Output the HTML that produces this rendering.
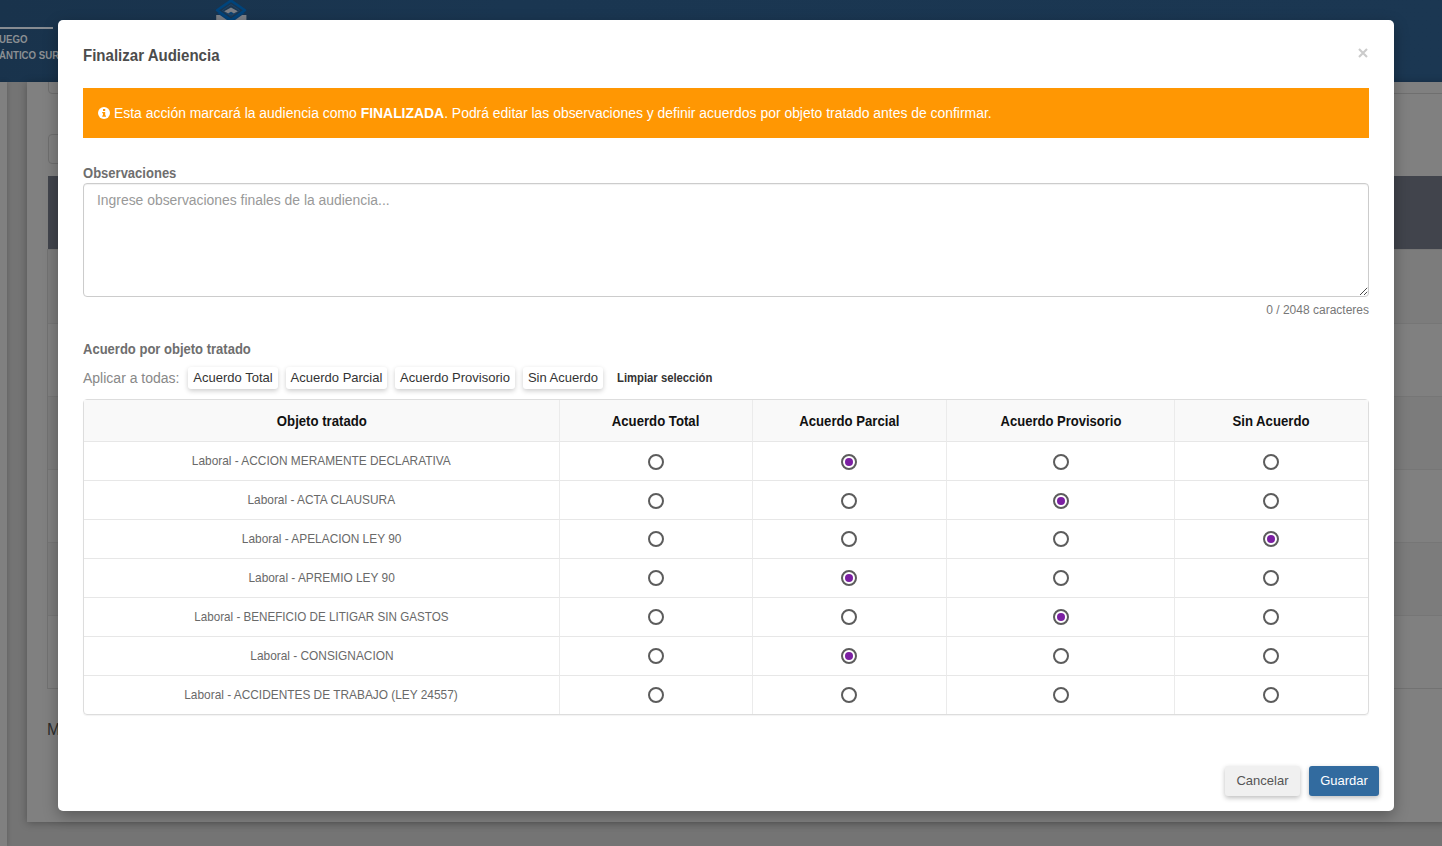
<!DOCTYPE html>
<html lang="es">
<head>
<meta charset="utf-8">
<title>Finalizar Audiencia</title>
<style>
*{box-sizing:border-box}
html,body{margin:0;padding:0}
body{width:1442px;height:846px;overflow:hidden;position:relative;background:#747474;font-family:"Liberation Sans",sans-serif;font-size:14px;color:#333}
.abs{position:absolute}
/* ---------- dimmed page behind the modal ---------- */
.bg-head{left:0;top:0;width:1442px;height:82px;background:linear-gradient(100deg,#19334c 0%,#1a3651 35%,#1b3752 100%)}
.bg-s1{left:0;top:82px;width:7px;height:764px;background:#808080;box-shadow:0 0 5px rgba(0,0,0,.22)}
.bg-panel{left:27px;top:82px;width:1420px;height:740px;background:#808080;box-shadow:0 1px 8px rgba(0,0,0,.3)}
.bg-line{left:0;top:26.7px;width:53px;height:2px;background:#878c92}
.bg-brand{left:-1.2px;top:31.4px;font-size:10.7px;font-weight:700;line-height:16px;color:#8b8f93;white-space:nowrap;transform-origin:0 0;transform:scaleX(.905)}
.bg-box{border:1px solid #6f6f6f;border-radius:4px}
.bg-th{left:48px;top:176px;width:1394px;height:73px;background:#41444c}
.bg-tbl{left:47px;top:249px;width:1400px;height:440px;border-left:1px solid #727272;border-bottom:1px solid #727272}
.bg-row{left:48px;width:1394px;height:73px;background:#7c7c7c;border-top:1px solid #767676;border-bottom:1px solid #767676}
.bg-m{left:47px;top:720.6px;font-size:16px;line-height:18px;color:#2c2c2c}
/* ---------- modal ---------- */
.modal{left:58px;top:20px;width:1336px;height:791px;background:#fff;border-radius:5px;box-shadow:0 5px 15px rgba(0,0,0,.3)}
.title{left:25px;top:25px;font-size:16px;font-weight:700;color:#4c4c4c;line-height:22px;white-space:nowrap;transform-origin:0 50%;transform:scaleX(.94)}
.close{left:1300.4px;top:28.4px;width:10px;height:10px}
.alert{left:25px;top:68px;width:1286px;height:50px;background:#ff9703;color:#fff;font-size:14px;line-height:50px;white-space:nowrap}
.alert svg{position:absolute;left:15px;top:19px}
.alert .t{position:absolute;left:31px;top:0;transform-origin:0 50%;transform:scaleX(.9937)}
.lbl{font-size:14px;font-weight:700;color:#6e6e6e;line-height:20px;white-space:nowrap;transform-origin:0 50%;transform:scaleX(.93)}
.ta{left:25px;top:163px;width:1286px;height:114px;border:1px solid #ccc;border-radius:4px;background:#fff;box-shadow:inset 0 1px 1px rgba(0,0,0,.06)}
.ta .ph{position:absolute;left:12.6px;top:6px;font-size:14px;line-height:20px;color:#999;white-space:nowrap;transform-origin:0 50%;transform:scaleX(.992)}
.ta svg{position:absolute;right:0;bottom:0}
.count{right:25px;top:282px;font-size:12px;line-height:16px;color:#777;white-space:nowrap}
.apply{left:25px;top:348px;font-size:14px;line-height:20px;color:#888;white-space:nowrap}
.sb{top:347px;height:22px;background:#fff;border-radius:3px;font-size:13px;line-height:22px;color:#333;text-align:center;white-space:nowrap;box-shadow:0 2px 5px rgba(0,0,0,.2)}
.clear{left:559px;top:348px;font-size:12px;font-weight:700;line-height:20px;color:#333;white-space:nowrap;transform-origin:0 50%;transform:scaleX(.94)}
table{position:absolute;left:25px;top:379px;width:1286px;border-collapse:separate;border-spacing:0;border:1px solid #ddd;border-radius:4px;table-layout:fixed;box-shadow:0 1px 1px rgba(0,0,0,.05)}
th,td{text-align:center;vertical-align:middle;padding:0;border-left:1px solid #ebebeb;border-top:1px solid #e7e7e7}
th:first-child,td:first-child{border-left:0}
th{height:41px;background:#f9f9f9;font-size:14px;font-weight:700;color:#111;border-top:0}
th span{display:inline-block;transform:scaleX(.94)}
td{height:39px;font-size:12.6px;color:#696969}
td span{display:inline-block;position:relative;top:0;white-space:nowrap;transform:scaleX(.943)}
td:nth-child(3) .r,td:nth-child(5) .r{left:-1px}
th:nth-child(5) span{position:relative;left:-1px}
th:nth-child(4) span{transform:scaleX(.93)}
.r{display:inline-block;width:16px;height:16px;border:2px solid #5c5c5c;border-radius:50%;vertical-align:middle;position:relative;top:1px;background:#fff}
tr.u .r{top:0}
.r.on::after{content:"";position:absolute;left:2px;top:2px;width:8px;height:8px;border-radius:50%;background:#7b1fa2}
.btn{top:746px;height:30px;border-radius:3px;font-size:13px;line-height:30px;text-align:center;white-space:nowrap;box-shadow:0 2px 5px rgba(0,0,0,.26)}
.cancel{left:1167px;width:75px;background:#f0f0f0;color:#555}
.save{left:1251px;width:70px;background:#326b9f;color:#fff}
</style>
</head>
<body>
<div class="abs bg-head"></div>
<div class="abs bg-s1"></div>
<div class="abs bg-panel"></div>
<div class="abs bg-line"></div>
<div class="abs bg-brand">UEGO<br>ÁNTICO SUR</div>
<svg class="abs" style="left:214px;top:0" width="34" height="20" viewBox="0 0 34 20">
  <rect x="2.2" y="15" width="30.2" height="5" fill="#7c8087"/><path d="M6.5 14 L17 21.4 L27.5 14 Z" fill="#1a3651" stroke="#0b3f70" stroke-width="2.4"/>
  <path d="M17 0.6 L30.9 10.3 L17 20 L3.1 10.3 Z" fill="#1a3651" stroke="#00447c" stroke-width="2.6" stroke-linejoin="round"/>
  <path d="M17 4.6 L25.6 10.4 L17 16.2 L8.4 10.4 Z" fill="none" stroke="#1d4870" stroke-width=".8"/>
  <path d="M17 7.6 L23.8 11.2 L17 15 L10.2 11.2 Z" fill="#7c8087"/>
  <path d="M17 11.8 L20 13.5 L17 15.2 L14 13.5 Z" fill="#0a4273"/>
</svg>
<div class="abs bg-box" style="left:48px;top:70px;width:1400px;height:24px;clip-path:inset(12px 0 0 0)"></div>
<div class="abs bg-box" style="left:48px;top:134px;width:230px;height:30px"></div>
<div class="abs bg-th"></div>
<div class="abs bg-tbl"></div>
<div class="abs bg-row" style="top:249px;height:75px"></div>
<div class="abs bg-row" style="top:396px;height:74px"></div>
<div class="abs bg-row" style="top:542px;height:74px"></div>
<div class="abs bg-m">Mostrando</div>

<div class="abs modal">
  <div class="abs title">Finalizar Audiencia</div>
  <svg class="abs close" viewBox="0 0 10 10"><path d="M1 1 L9 9 M9 1 L1 9" stroke="#cbcbcb" stroke-width="2.1" fill="none"/></svg>
  <div class="abs alert">
    <svg width="12" height="12" viewBox="0 0 12 12"><circle cx="6" cy="6" r="6" fill="#fff"/><rect x="5" y="2" width="2.2" height="2" fill="#ff9703"/><path d="M4.2 5 H7.2 V8.6 H8 V9.8 H4.2 V8.6 H5 V6.2 H4.2 Z" fill="#ff9703"/></svg>
    <span class="t">Esta acción marcará la audiencia como <b>FINALIZADA</b>. Podrá editar las observaciones y definir acuerdos por objeto tratado antes de confirmar.</span>
  </div>
  <div class="abs lbl" style="left:25px;top:143px">Observaciones</div>
  <div class="abs ta"><span class="ph">Ingrese observaciones finales de la audiencia...</span>
    <svg width="10" height="10" viewBox="0 0 10 10"><path d="M9.2 1.8 L2 9 M9.2 5.8 L6 9" stroke="#4a4a4a" stroke-width="1" fill="none"/></svg>
  </div>
  <div class="abs count">0 / 2048 caracteres</div>
  <div class="abs lbl" style="left:25px;top:319px">Acuerdo por objeto tratado</div>
  <div class="abs apply">Aplicar a todas:</div>
  <div class="abs sb" style="left:130px;width:90px">Acuerdo Total</div>
  <div class="abs sb" style="left:228px;width:101px">Acuerdo Parcial</div>
  <div class="abs sb" style="left:337px;width:120px">Acuerdo Provisorio</div>
  <div class="abs sb" style="left:465px;width:80px">Sin Acuerdo</div>
  <div class="abs clear">Limpiar selección</div>
  <table>
    <colgroup><col style="width:475px"><col style="width:193px"><col style="width:194px"><col style="width:228px"><col style="width:194px"></colgroup>
    <thead><tr><th><span>Objeto tratado</span></th><th><span>Acuerdo Total</span></th><th><span>Acuerdo Parcial</span></th><th><span>Acuerdo Provisorio</span></th><th><span>Sin Acuerdo</span></th></tr></thead>
    <tbody>
      <tr><td><span>Laboral - ACCION MERAMENTE DECLARATIVA</span></td><td><i class="r"></i></td><td><i class="r on"></i></td><td><i class="r"></i></td><td><i class="r"></i></td></tr>
      <tr><td><span>Laboral - ACTA CLAUSURA</span></td><td><i class="r"></i></td><td><i class="r"></i></td><td><i class="r on"></i></td><td><i class="r"></i></td></tr>
      <tr class="u"><td><span>Laboral - APELACION LEY 90</span></td><td><i class="r"></i></td><td><i class="r"></i></td><td><i class="r"></i></td><td><i class="r on"></i></td></tr>
      <tr class="u"><td><span>Laboral - APREMIO LEY 90</span></td><td><i class="r"></i></td><td><i class="r on"></i></td><td><i class="r"></i></td><td><i class="r"></i></td></tr>
      <tr class="u"><td><span style="transform:scaleX(.925)">Laboral - BENEFICIO DE LITIGAR SIN GASTOS</span></td><td><i class="r"></i></td><td><i class="r"></i></td><td><i class="r on"></i></td><td><i class="r"></i></td></tr>
      <tr class="u"><td><span>Laboral - CONSIGNACION</span></td><td><i class="r"></i></td><td><i class="r on"></i></td><td><i class="r"></i></td><td><i class="r"></i></td></tr>
      <tr class="u"><td><span>Laboral - ACCIDENTES DE TRABAJO (LEY 24557)</span></td><td><i class="r"></i></td><td><i class="r"></i></td><td><i class="r"></i></td><td><i class="r"></i></td></tr>
    </tbody>
  </table>
  <div class="abs btn cancel">Cancelar</div>
  <div class="abs btn save">Guardar</div>
</div>
</body>
</html>
